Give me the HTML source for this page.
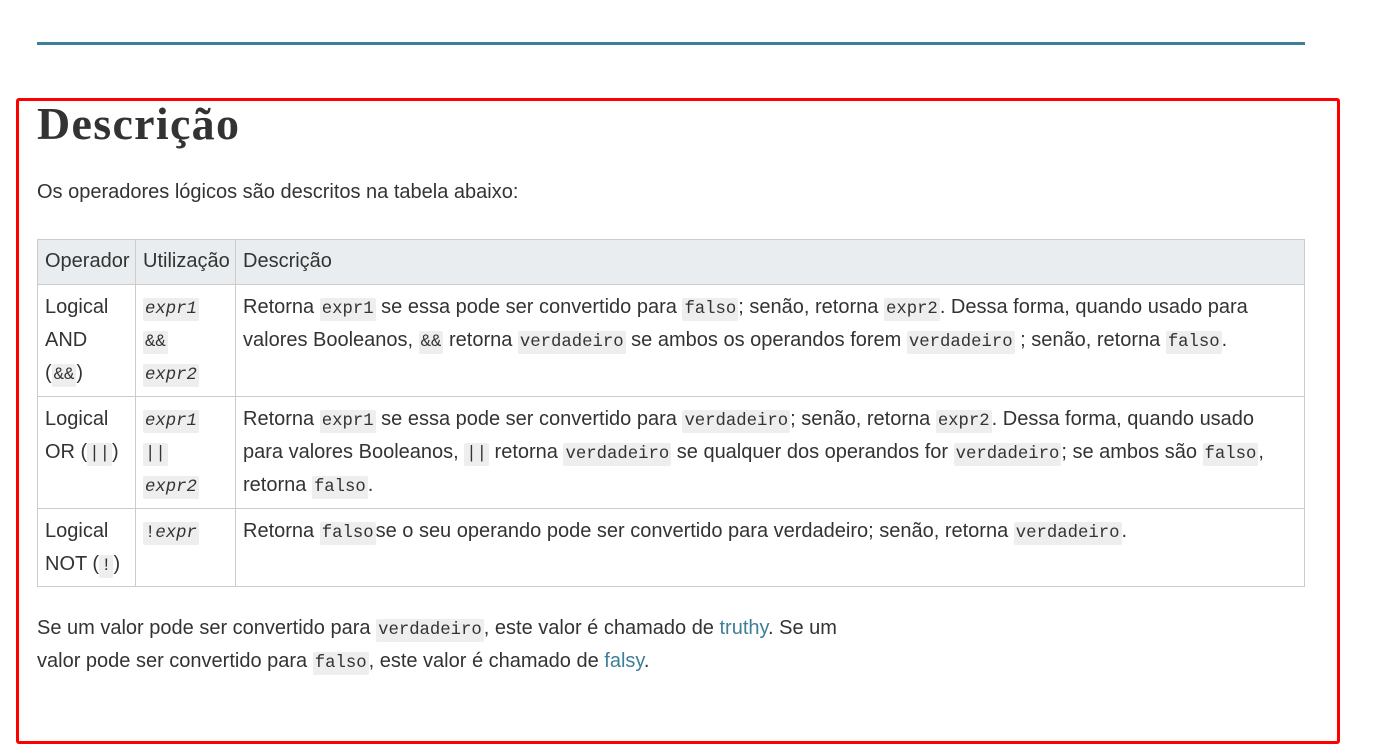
<!DOCTYPE html>
<html><head><meta charset="utf-8"><style>
body{margin:0;background:#fff;width:1386px;height:703px;overflow:hidden;font-family:"Liberation Sans",Arial,sans-serif;color:#333;font-size:20px;}
.line{position:absolute;left:37px;top:42px;width:1268px;height:3px;background:#3d7e9a;}
.box{position:absolute;left:16px;top:98px;width:1318px;height:640px;border:3px solid #f00;border-radius:3px;}
h2{position:absolute;left:37px;top:97px;margin:0;font-family:"Liberation Serif",serif;font-weight:bold;font-size:46px;color:#333;letter-spacing:1.3px;}
p{margin:0;line-height:33px;}
code{font-family:"Liberation Mono",monospace;font-size:17.3px;line-height:1;background:#eee;padding:2px 2px;border-radius:2px;}
.p1{position:absolute;left:37px;top:176px;}
table{position:absolute;left:37px;top:239px;width:1268px;border-collapse:collapse;table-layout:fixed;}
td,th{border:1px solid #ccc;padding:6px 4px 6px 7px;vertical-align:top;text-align:left;font-weight:normal;line-height:33px;}
th{background:#e9edf0;padding:5px 4px 5px 7px;height:34px;}
i code{font-style:italic;}
.p2{position:absolute;left:37px;top:612px;}
a{color:#3d7e9a;text-decoration:none;}
</style></head><body>
<div class="line"></div>
<div class="box"></div>
<h2>Descrição</h2>
<p class="p1">Os operadores lógicos são descritos na tabela abaixo:</p>
<table>
<tr><th style="width:86px">Operador</th><th style="width:88px">Utilização</th><th>Descrição</th></tr>
<tr style="height:112px"><td>Logical<br>AND<br>(<code>&amp;&amp;</code>)</td><td><i><code>expr1</code></i><br><code>&amp;&amp;</code><br><i><code>expr2</code></i></td><td>Retorna <code>expr1</code> se essa pode ser convertido para <code>falso</code>; senão, retorna <code>expr2</code>. Dessa forma, quando usado para<br>valores Booleanos, <code>&amp;&amp;</code> retorna <code>verdadeiro</code> se ambos os operandos forem <code>verdadeiro</code> ; senão, retorna <code>falso</code>.</td></tr>
<tr style="height:112px"><td>Logical<br>OR (<code>||</code>)</td><td><i><code>expr1</code></i><br><code>||</code><br><i><code>expr2</code></i></td><td>Retorna <code>expr1</code> se essa pode ser convertido para <code>verdadeiro</code>; senão, retorna <code>expr2</code>. Dessa forma, quando usado<br>para valores Booleanos, <code>||</code> retorna <code>verdadeiro</code> se qualquer dos operandos for <code>verdadeiro</code>; se ambos são <code>falso</code>,<br>retorna <code>falso</code>.</td></tr>
<tr style="height:78px"><td style="padding-bottom:4px">Logical<br>NOT (<code>!</code>)</td><td><code>!<i>expr</i></code></td><td>Retorna <code>falso</code>se o seu operando pode ser convertido para verdadeiro; senão, retorna <code>verdadeiro</code>.</td></tr>
</table>
<p class="p2">Se um valor pode ser convertido para <code>verdadeiro</code>, este valor é chamado de <a>truthy</a>. Se um<br>valor pode ser convertido para <code>falso</code>, este valor é chamado de <a>falsy</a>.</p>
</body></html>
